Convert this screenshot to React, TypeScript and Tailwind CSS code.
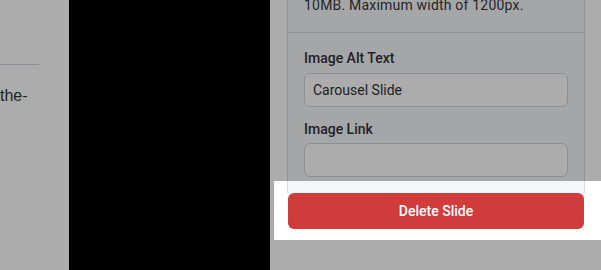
import React from "react"

function Field({ label, value, gap }: { label: string; value?: string; gap: string }) {
  return (
    <div>
      <label className={`block text-sm font-medium leading-5 text-[#333] ${gap}`}>{label}</label>
      <div className="flex h-[34px] items-center rounded-md border border-[#d1d3d8] bg-white px-2 text-sm text-[#333]">
        {value}
      </div>
    </div>
  )
}

export default function App() {
  return (
    <div className="relative flex h-[270px] w-[601px] overflow-hidden bg-white font-['Roboto',sans-serif]">
      {/* Page content, cut off */}
      <div className="w-[69px] shrink-0 pt-[64px]">
        <div className="h-px w-[39px] bg-[#d5d6de]" />
        <p className="mt-[21px] font-['Liberation_Sans',Arial,sans-serif] text-[16px] leading-5 text-[#333]">
          the-
        </p>
      </div>

      {/* Slide preview */}
      <div className="w-[201px] shrink-0 bg-black" />
      <div className="w-[17px] shrink-0" />

      {/* Slide settings */}
      <aside className="flex w-[298px] shrink-0 flex-col">
        <div className="h-[193px] border-x border-[#d8dae0] bg-[#f5f6fa]">
          <div className="border-b border-[#d8dae0] px-4 pb-[17px]">
            <p className="-mt-[5px] text-sm leading-5 tracking-[0.2px] text-[#383838]">
              10MB. Maximum width of 1200px.
            </p>
          </div>
          <div className="px-4 pt-[15px]">
            <Field label="Image Alt Text" value="Carousel Slide" gap="mb-[5px]" />
            <div className="mt-3">
              <Field label="Image Link" gap="mb-1" />
            </div>
          </div>
        </div>
        <button
          type="button"
          className="mx-px h-9 rounded-md bg-[#d03b3b] text-sm font-medium text-white"
        >
          Delete Slide
        </button>
      </aside>

      {/* Tour spotlight */}
      <div className="pointer-events-none absolute left-[274px] top-[181px] h-[59px] w-[327px] shadow-[0_0_0_9999px_rgba(0,0,0,0.325)]" />
    </div>
  )
}
